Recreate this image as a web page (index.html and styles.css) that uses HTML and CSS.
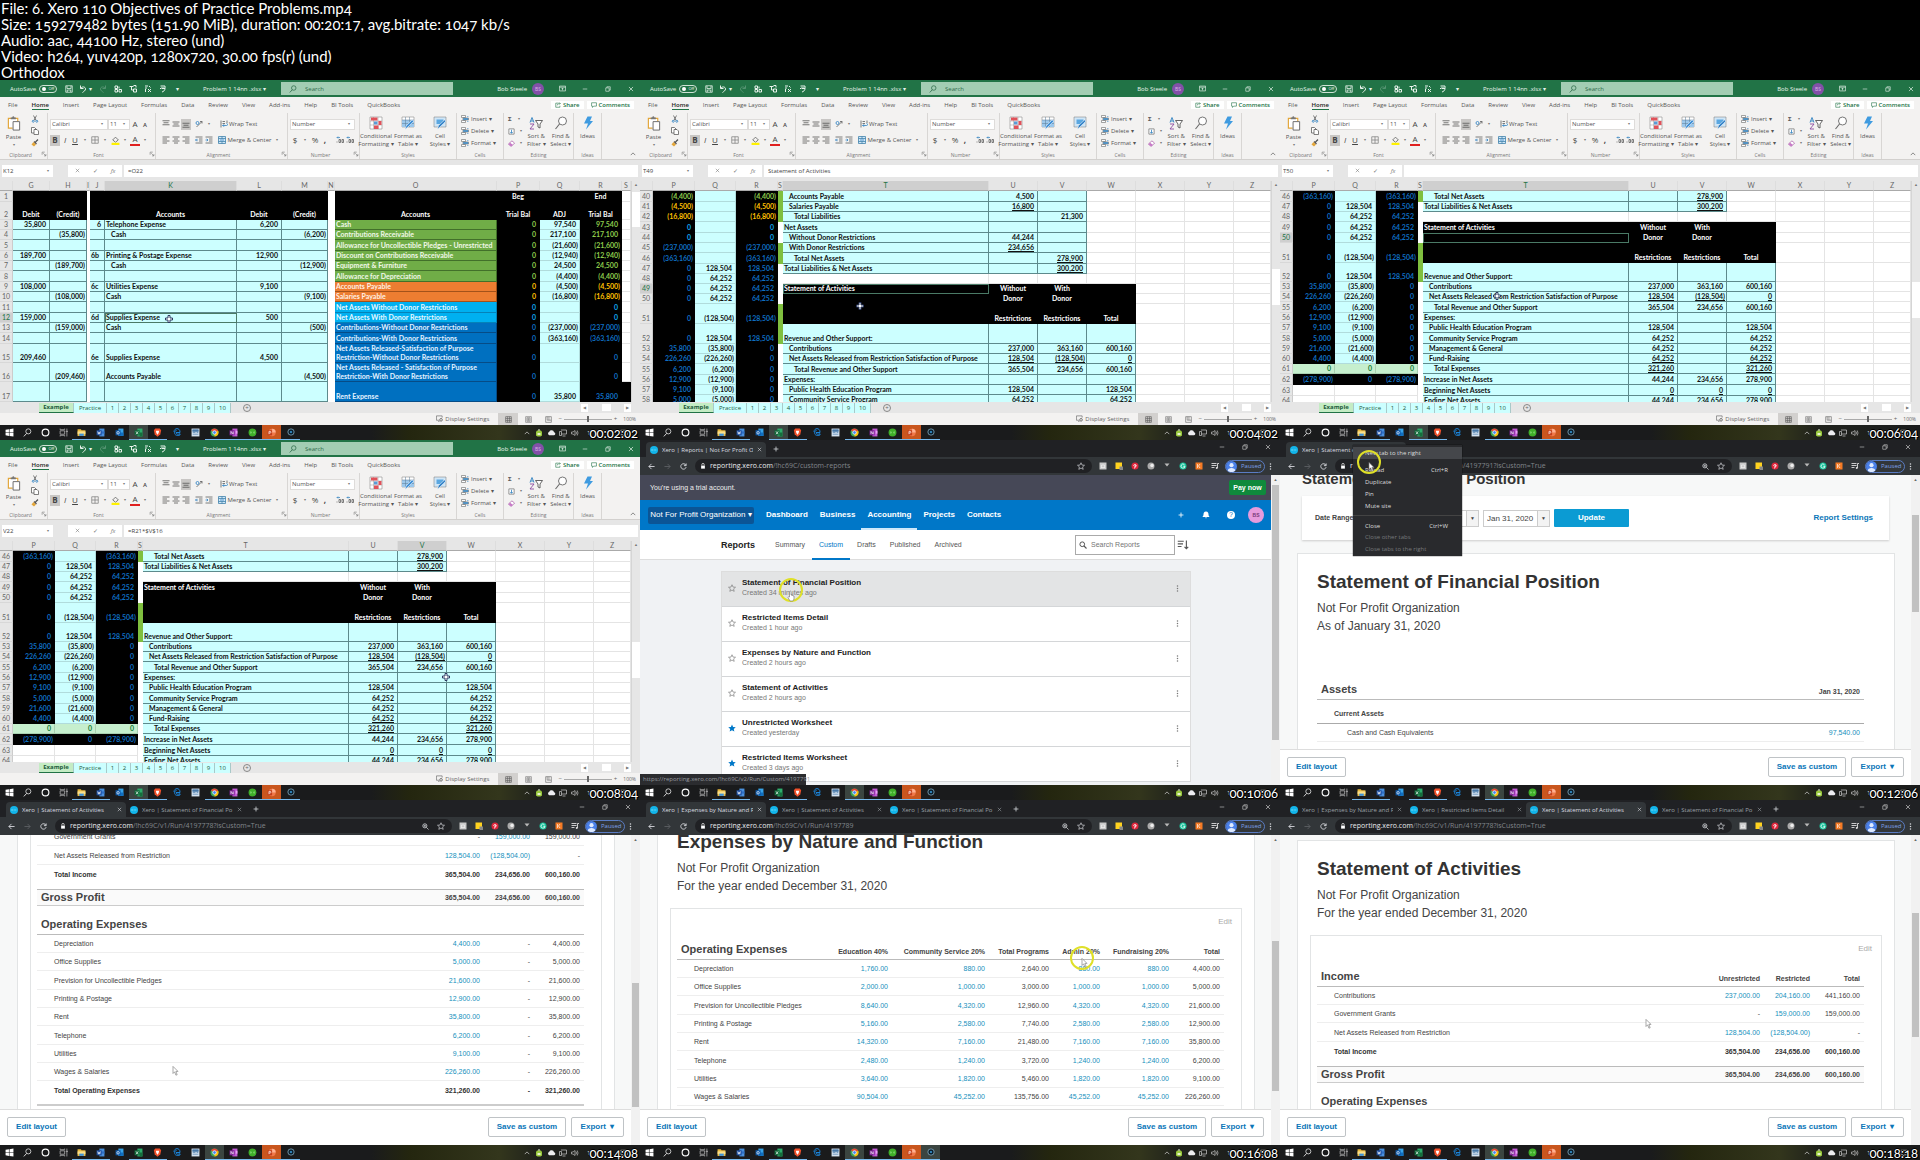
FILE: index.html
```html
<!DOCTYPE html>
<html lang="en">
<head>
<meta charset="utf-8">
<title>6. Xero 110 Objectives of Practice Problems.mp4</title>
<link rel="stylesheet" href="styles.css">
</head>
<body>
<svg class="sprite" aria-hidden="true">
  <symbol id="save" viewBox="0 0 16 16"><path d="M1.500 1.500h13v13h-13zM4 2v5h8V2M4.500 14v-4h7v4" fill="none" stroke="currentColor" stroke-width="1.500"/></symbol>
  <symbol id="undo" viewBox="0 0 16 16"><path d="M3 1v6h6M3.500 6.500C6 2.500 13 3 13 8c0 3-3 4.500-6 7" fill="none" stroke="currentColor" stroke-width="2"/></symbol>
  <symbol id="redo" viewBox="0 0 16 16"><path d="M13 1v6H7M12.500 6.500C10 2.500 3 3 3 8c0 3 3 4.500 6 7" fill="none" stroke="currentColor" stroke-width="2"/></symbol>
  <symbol id="qa1" viewBox="0 0 16 16"><path d="M2 2h5v5H2zM2 9h5v5H2zM10 9h5v5h-5zM10 3v4" fill="none" stroke="currentColor" stroke-width="2"/></symbol>
  <symbol id="qa2" viewBox="0 0 16 16"><path d="M1 3h8M5 3v7h4M9 8h6v6H9zM9 1h5v4" fill="none" stroke="currentColor" stroke-width="2"/></symbol>
  <symbol id="qa3" viewBox="0 0 16 16"><path d="M2 2h6M2 6h4M3 8v6M8 8l6 6M14 8l-6 6M10 2l3 3" fill="none" stroke="currentColor" stroke-width="2"/></symbol>
  <symbol id="qa4" viewBox="0 0 16 16"><path d="M3 2h9v5H5M12 7c0 4-3 6-6 7M2 8l3-3M8 4v3" fill="none" stroke="currentColor" stroke-width="2"/></symbol>
  <symbol id="search" viewBox="0 0 16 16"><circle cx="9.500" cy="6" r="4.500" fill="none" stroke="currentColor" stroke-width="1.500"/><path d="M6.500 9.500L1.500 15" stroke="currentColor" stroke-width="1.700"/></symbol>
  <symbol id="searchr" viewBox="0 0 16 16"><circle cx="6.500" cy="6.500" r="4.700" fill="none" stroke="currentColor" stroke-width="2"/><path d="M10 10l5 5" stroke="currentColor" stroke-width="2.200"/></symbol>
  <symbol id="zoomin" viewBox="0 0 16 16"><circle cx="6.500" cy="6.500" r="4.700" fill="none" stroke="currentColor" stroke-width="1.800"/><path d="M10 10l5 5M4 6.500h5M6.500 4v5" stroke="currentColor" stroke-width="1.600"/></symbol>
  <symbol id="display" viewBox="0 0 16 16"><path d="M8 12H1V2h13v4M5 15h3" fill="none" stroke="currentColor" stroke-width="1.500"/><circle cx="11.500" cy="11" r="3" fill="none" stroke="currentColor" stroke-width="2"/></symbol>
  <symbol id="ribbonmode" viewBox="0 0 16 16"><path d="M1 2.500h14v11H1zM1 5h14M8 12V7M5.500 9.500L8 7l2.500 2.500" fill="none" stroke="currentColor" stroke-width="1.500"/></symbol>
  <symbol id="min" viewBox="0 0 16 16"><path d="M2 8h12" stroke="currentColor" stroke-width="1.600"/></symbol>
  <symbol id="max" viewBox="0 0 16 16"><path d="M2 5h9v9H2zM5 5V2h9v9h-3" fill="none" stroke="currentColor" stroke-width="1.600"/></symbol>
  <symbol id="close" viewBox="0 0 16 16"><path d="M2.500 2.500l11 11M13.500 2.500l-11 11" stroke="currentColor" stroke-width="1.800"/></symbol>
  <symbol id="plus" viewBox="0 0 16 16"><path d="M8 1.500v13M1.500 8h13" stroke="currentColor" stroke-width="2.200"/></symbol>
  <symbol id="share" viewBox="0 0 16 16"><path d="M9 3H2v11h11v-4M6 9c0-4 4-5 8-5M11 1l3 3-3 3" fill="none" stroke="currentColor" stroke-width="1.600"/></symbol>
  <symbol id="comment" viewBox="0 0 16 16"><path d="M1.500 2h13v9H7l-3 3.500V11H1.500z" fill="none" stroke="currentColor" stroke-width="1.600"/></symbol>
  <symbol id="paste" viewBox="0 0 28 32"><path d="M11 26H2V5h20v6" fill="#fff" stroke="#e2a63a" stroke-width="2.500"/><path d="M7 7V3h3c1-3 4-3 5 0h3v4z" fill="#777"/><path d="M12 12h14v18H12z" fill="#fff" stroke="#666" stroke-width="2"/></symbol>
  <symbol id="cut" viewBox="0 0 16 16"><path d="M5 1l5 10M11 1L6 11" stroke="#555" stroke-width="1.500"/><circle cx="4.500" cy="12.500" r="2" fill="none" stroke="#2b7fc0" stroke-width="1.600"/><circle cx="11.500" cy="12.500" r="2" fill="none" stroke="#2b7fc0" stroke-width="1.600"/></symbol>
  <symbol id="copy" viewBox="0 0 16 16"><path d="M6 12H1V1h6l3 3v2M6 5h6l3 3v7H6z" fill="#fff" stroke="#555" stroke-width="1.500"/></symbol>
  <symbol id="brush" viewBox="0 0 16 16"><path d="M14 1l-5 5M6 5l5 5" stroke="#555" stroke-width="2.500"/><path d="M5 6l5 5-4 4-5-4z" fill="#e2a63a"/></symbol>
  <symbol id="al" viewBox="0 0 16 16"><path d="M1 2h14M1 6h9M1 10h14M1 14h9" stroke="#555" stroke-width="1.600"/></symbol>
  <symbol id="ac" viewBox="0 0 16 16"><path d="M1 2h14M4 6h8M1 10h14M4 14h8" stroke="#555" stroke-width="1.600"/></symbol>
  <symbol id="ar" viewBox="0 0 16 16"><path d="M1 2h14M6 6h9M1 10h14M6 14h9" stroke="#555" stroke-width="1.600"/></symbol>
  <symbol id="vt" viewBox="0 0 16 16"><path d="M1 1.500h14M3 5.500h10M1 9.500h14" stroke="#555" stroke-width="1.600"/></symbol>
  <symbol id="vm" viewBox="0 0 16 16"><path d="M1 4h14M3 8h10M1 12h14" stroke="#555" stroke-width="1.600"/></symbol>
  <symbol id="vb" viewBox="0 0 16 16"><path d="M1 6.500h14M3 10.500h10M1 14.500h14" stroke="#555" stroke-width="1.600"/></symbol>
  <symbol id="orient" viewBox="0 0 16 16"><path d="M3 14L14 3M14 7V3h-4" fill="none" stroke="#555" stroke-width="1.500"/><circle cx="5" cy="6" r="3" fill="none" stroke="#2b7fc0" stroke-width="1.600"/></symbol>
  <symbol id="indl" viewBox="0 0 16 16"><path d="M1 2h14M8 6h7M8 10h7M1 14h14" stroke="#555" stroke-width="1.500"/><path d="M6 8H1M3.500 5.500L1 8l2.500 2.500" fill="none" stroke="#2b7fc0" stroke-width="1.500"/></symbol>
  <symbol id="indr" viewBox="0 0 16 16"><path d="M1 2h14M8 6h7M8 10h7M1 14h14" stroke="#555" stroke-width="1.500"/><path d="M1 8h5M3.500 5.500L6 8l-2.500 2.500" fill="none" stroke="#2b7fc0" stroke-width="1.500"/></symbol>
  <symbol id="wrap" viewBox="0 0 16 16"><path d="M2 1v14M14 1v5M5 3h5M5 7h5" stroke="#555" stroke-width="1.500"/><path d="M5 11h8c3 0 3-4 0-4M8 8.500L5.500 11 8 13.500" fill="none" stroke="#2b7fc0" stroke-width="1.600"/></symbol>
  <symbol id="merge" viewBox="0 0 16 16"><path d="M1 1h14v14H1zM1 5h14M1 11h14M8 1v4M8 11v4" fill="#cfe6f7" stroke="#3a7da8" stroke-width="1.500"/><path d="M4 8h8" stroke="#2b7fc0" stroke-width="1.500"/></symbol>
  <symbol id="borders" viewBox="0 0 16 16"><path d="M1.500 1.500h13v13h-13zM8 1.500v13M1.500 8h13" fill="none" stroke="#777" stroke-width="1.400"/></symbol>
  <symbol id="fill" viewBox="0 0 16 16"><path d="M3 7l5-5 5 5-5 4z" fill="none" stroke="#666" stroke-width="1.500"/><path d="M1 12h14v4H1z" fill="#fff200"/></symbol>
  <symbol id="dec" viewBox="0 0 16 16"><path d="M1 12h2M6 7h3v6H6zM12 7h3v6h-3z" fill="none" stroke="#555" stroke-width="1.500"/><path d="M8 3H2M4 1L2 3l2 2" fill="none" stroke="#2b7fc0" stroke-width="1.400"/></symbol>
  <symbol id="condfmt" viewBox="0 0 28 28"><path d="M2 2h24v24H2z" fill="#fff" stroke="#777"/><path d="M9 2v24M18 2v24M2 10h24M2 18h24" stroke="#999"/><path d="M4 3h13v6H4zM10 19h9v7h-9z" fill="#e0525a"/><path d="M10 11h7v6h-7z" fill="#5a9bd5"/><path d="M19 10h6v8h-6z" fill="#e0525a"/></symbol>
  <symbol id="fmttable" viewBox="0 0 28 28"><path d="M2 2h24v20H2z" fill="#fff" stroke="#777"/><path d="M2 8h24v14H2z" fill="#9cc8ec"/><path d="M9 2v20M17 2v20M2 8h24M2 15h24" stroke="#5b7b95"/><path d="M26 10L14 22l-6 5 2-7 12-12z" fill="#3f8fd6" stroke="#fff"/></symbol>
  <symbol id="cellstyle" viewBox="0 0 28 28"><path d="M2 2h24v20H2z" fill="#cfe6f7" stroke="#777"/><path d="M7 7h14v9H7z" fill="#5aa7e0"/><path d="M26 10L16 20l-7 7 2-8 12-11z" fill="#2f7fc6" stroke="#fff"/></symbol>
  <symbol id="cells" viewBox="0 0 16 16"><path d="M1 1h8v4H1zM1 11h8v4H1zM4 6h11v4H4z" fill="#fff" stroke="#666" stroke-width="1.200"/><path d="M5 7h9v2H5zM12 3h3M12 13h3" fill="#2b7fc0" stroke="#2b7fc0"/></symbol>
  <symbol id="filldown" viewBox="0 0 16 16"><path d="M2 2h12v12H2z" fill="#fff" stroke="#666" stroke-width="1.500"/><path d="M8 4v8M5 9l3 3 3-3" fill="none" stroke="#2b7fc0" stroke-width="1.800"/></symbol>
  <symbol id="eraser" viewBox="0 0 16 16"><path d="M6 14L1 9l8-7 6 5-7 7z" fill="#fff" stroke="#a04aa0" stroke-width="1.500"/><path d="M6 14L1 9l4-3 6 5-3 3z" fill="#c77bc7"/></symbol>
  <symbol id="sortf" viewBox="0 0 28 28"><path d="M2 13L6 3l4 10M3.500 10h5" fill="none" stroke="#2b7fc0" stroke-width="1.800"/><path d="M2 16h8L2 26h8" fill="none" stroke="#8a4aa0" stroke-width="1.800"/><path d="M13 9h14l-5 7v8l-4-2v-6z" fill="#fff" stroke="#555" stroke-width="1.800"/></symbol>
  <symbol id="find" viewBox="0 0 28 28"><circle cx="17" cy="10" r="8" fill="#fff" stroke="#666" stroke-width="1.800"/><path d="M11 16L3 26" stroke="#666" stroke-width="2.200"/></symbol>
  <symbol id="bolt" viewBox="0 0 28 28"><path d="M13 1h9l-4 9h6L10 27l4-12H6z" fill="#3f9be0"/></symbol>
  <symbol id="launch" viewBox="0 0 16 16"><path d="M3 10V3h7M6 6l7 7M13 8v5H8" fill="none" stroke="#777" stroke-width="1.600"/></symbol>
  <symbol id="up" viewBox="0 0 16 16"><path d="M2 11l6-6 6 6" fill="none" stroke="currentColor" stroke-width="1.800"/></symbol>
  <symbol id="vnormal" viewBox="0 0 16 16"><path d="M1.500 1.500h13v13h-13zM6 1.500v13M10.500 1.500v13M1.500 6h13M1.500 10.500h13" fill="none" stroke="#555" stroke-width="1.400"/></symbol>
  <symbol id="vpage" viewBox="0 0 16 16"><path d="M1.500 1.500h13v13h-13zM4.500 4h7v8h-7zM6 6h4M6 8h4M6 10h4" fill="none" stroke="#666" stroke-width="1.300"/></symbol>
  <symbol id="vbreak" viewBox="0 0 16 16"><path d="M1.500 1.500h13v13h-13zM5 1.500v8h9M9 1.500v8" fill="none" stroke="#666" stroke-width="1.400"/></symbol>
  <symbol id="win" viewBox="0 0 16 16"><path d="M1 3l6-1v5.500H1zM8 2l7-1v6.500H8zM1 8.500h6V14l-6-1zM8 8.500h7V15l-7-1z" fill="#fff"/></symbol>
  <symbol id="ring" viewBox="0 0 16 16"><circle cx="8" cy="8" r="6" fill="none" stroke="#fff" stroke-width="2"/></symbol>
  <symbol id="tview" viewBox="0 0 16 16"><path d="M2 5h8v6H2zM2 1v2h8V1M2 15v-2h8v2M14 1v14M12 6h4" fill="none" stroke="#bbb" stroke-width="1.300"/></symbol>
  <symbol id="folder" viewBox="0 0 16 16"><path d="M1 2h6l1 2h7v10H1z" fill="#e9b93f"/><path d="M1 6h14v5H1z" fill="#fbe08a"/><path d="M4 10h8v4H4z" fill="#3f93d8"/></symbol>
  <symbol id="word" viewBox="0 0 16 16"><path d="M6 1h9v14H6z" fill="#4a90dc"/><path d="M6 6h9v4H6z" fill="#2f6fc4"/><path d="M1 4h9v9H1z" fill="#1c4ea0"/><path d="M3 6l1.300 5L5.500 7l1.200 4L8 6" fill="none" stroke="#fff" stroke-width="1.100"/></symbol>
  <symbol id="outlook" viewBox="0 0 16 16"><path d="M6 1h9v13H6z" fill="#38a3e8"/><path d="M6 8h9v6H6z" fill="#0f6fc0"/><path d="M1 4h9v9H1z" fill="#0f5aa8"/><circle cx="5.500" cy="8.500" r="2.200" fill="none" stroke="#fff" stroke-width="1.200"/></symbol>
  <symbol id="excel" viewBox="0 0 16 16"><path d="M6 1h9v14H6z" fill="#2fae6c"/><path d="M10 8h5v7h-5z" fill="#15703c"/><path d="M1 4h9v9H1z" fill="#12693a"/><path d="M3.500 6l4 5M7.500 6l-4 5" stroke="#fff" stroke-width="1.200"/></symbol>
  <symbol id="onenote" viewBox="0 0 16 16"><path d="M6 1h9v14H6z" fill="#c45ad6"/><path d="M12 5h3v5h-3z" fill="#e8a6f2"/><path d="M1 4h9v9H1z" fill="#7c1f94"/><path d="M3.500 11V6l4 5V6" fill="none" stroke="#fff" stroke-width="1.200"/></symbol>
  <symbol id="ppt" viewBox="0 0 16 16"><circle cx="9" cy="8" r="6.500" fill="#f0784a"/><path d="M9 1.500A6.500 6.500 0 0 1 15.500 8H9z" fill="#ffb090"/><path d="M1 4h8v9H1z" fill="#c43e1c"/><path d="M3.500 11V6h2c2 0 2 3 0 3h-2" fill="none" stroke="#fff" stroke-width="1.200"/></symbol>
  <symbol id="pad" viewBox="0 0 16 16"><path d="M1 1h14v14H1z" fill="#d7e4f0"/><path d="M3 3h10v3H3zM3 8h5M3 11h10M10 8h3" fill="#4a7aa8" stroke="#4a7aa8" stroke-width="1.200"/></symbol>
  <symbol id="brave" viewBox="0 0 16 16"><path d="M4 1h8l2.500 3-1.500 7-5 4.500L3 11 1.500 4z" fill="#f0502a"/><path d="M5 5h6l-1 4-2 3-2-3z" fill="#fff"/></symbol>
  <symbol id="edge" viewBox="0 0 16 16"><path d="M2 8c0-9 12-9 12 0v1H6c0 4 5 4 8 2.500V14c-5 2-11 1-11-5 0-2 2-4 4-4" fill="none" stroke="#1b83d6" stroke-width="2"/></symbol>
  <symbol id="chrome" viewBox="0 0 16 16"><circle cx="8" cy="8" r="7" fill="#3aa757"/><path d="M8 8L2 4.500A7 7 0 0 1 14.500 5z" fill="#ea4335"/><path d="M8 8l6.500-3A7 7 0 0 1 8 15z" fill="#fbbc05"/><circle cx="8" cy="8" r="3.200" fill="#4285f4" stroke="#fff" stroke-width="1.300"/></symbol>
  <symbol id="qb" viewBox="0 0 16 16"><circle cx="8" cy="8" r="7" fill="#3fae2a"/><path d="M5 5.500v5M11 5.500v5M4 8h3M9 8h3" stroke="#7fd46c" stroke-width="1.300"/></symbol>
  <symbol id="media" viewBox="0 0 16 16"><circle cx="8" cy="8" r="6.300" fill="#0c2230" stroke="#9cc7e0" stroke-width="1.300"/><circle cx="8" cy="8" r="2" fill="#3b9ede"/></symbol>
  <symbol id="gpu" viewBox="0 0 16 16"><path d="M4 3h8l2 3v7l-3 2H5l-3-2V6z" fill="#9acb3c"/><path d="M5 8h6v4H5zM6 1h4v2H6z" fill="#e8f5cf"/></symbol>
  <symbol id="cloud" viewBox="0 0 16 16"><path d="M4 13a3.500 3.500 0 0 1 0-6.500 4.500 4.500 0 0 1 8.500 1A2.800 2.800 0 0 1 12.500 13z" fill="#eee"/></symbol>
  <symbol id="monitor" viewBox="0 0 16 16"><path d="M4 2h11v8H5M1 5h4v8H1zM7 14h6" fill="none" stroke="#ccc" stroke-width="1.400"/></symbol>
  <symbol id="speaker" viewBox="0 0 16 16"><path d="M1 6h3l4-3v10l-4-3H1zM10 5q2 3 0 6M12.500 3q3 5 0 10" fill="none" stroke="#ccc" stroke-width="1.300"/></symbol>
  <symbol id="note" viewBox="0 0 16 16"><path d="M1.500 2.500h13v9H9l-3 3v-3H1.500z" fill="none" stroke="#ccc" stroke-width="1.400"/></symbol>
  <symbol id="back" viewBox="0 0 16 16"><path d="M15 8H2M8 2L2 8l6 6" fill="none" stroke="currentColor" stroke-width="2"/></symbol>
  <symbol id="fwd" viewBox="0 0 16 16"><path d="M1 8h13M8 2l6 6-6 6" fill="none" stroke="currentColor" stroke-width="2"/></symbol>
  <symbol id="reload" viewBox="0 0 16 16"><path d="M13.500 5A6.200 6.200 0 1 0 14 9.500M14 1v5H9" fill="none" stroke="currentColor" stroke-width="2"/></symbol>
  <symbol id="lock" viewBox="0 0 16 16"><path d="M3 7h10v8H3z" fill="#fff"/><path d="M5 7V4a3 3 0 0 1 6 0v3" fill="none" stroke="#fff" stroke-width="1.800"/></symbol>
  <symbol id="star" viewBox="0 0 16 16"><path d="M8 1.500l2 4.600 5 .4-3.800 3.300 1.200 4.900L8 12.100l-4.400 2.600 1.200-4.900L1 6.500l5-.4z" fill="none" stroke="currentColor" stroke-width="1.300"/></symbol>
  <symbol id="starf" viewBox="0 0 16 16"><path d="M8 1l2.200 5 5.300.4-4 3.500 1.200 5.200L8 12.400 3.300 15.100l1.200-5.200-4-3.500L5.800 6z" fill="#0078c8"/></symbol>
  <symbol id="e1" viewBox="0 0 16 16"><path d="M1 1h14v14H1z" fill="#c9c9c9"/><path d="M4 11h8M5 11V6h6v5" stroke="#fff" fill="none"/></symbol>
  <symbol id="e2" viewBox="0 0 16 16"><path d="M1 1h13v9l-4 4H1z" fill="#ffd21f"/><path d="M9 9h7v7H9z" fill="#888"/></symbol>
  <symbol id="e3" viewBox="0 0 16 16"><circle cx="8" cy="8" r="7" fill="#e0263c"/><path d="M7 13l2-7M5.500 8c-1-4 6-4 5 0-.5 2-2.500 2-3 1" fill="none" stroke="#fff" stroke-width="1.600"/></symbol>
  <symbol id="e4" viewBox="0 0 16 16"><circle cx="8" cy="8" r="7" fill="#aaa"/><circle cx="10" cy="7" r="3.500" fill="#eee"/></symbol>
  <symbol id="e5" viewBox="0 0 16 16"><path d="M3 3h10l-5 6z" fill="#bbb"/></symbol>
  <symbol id="e6" viewBox="0 0 16 16"><circle cx="8" cy="8" r="7" fill="#15c39a"/><path d="M11 5.500a4 4 0 1 0 1 3H8.500" fill="none" stroke="#fff" stroke-width="1.600"/></symbol>
  <symbol id="e7" viewBox="0 0 16 16"><path d="M1 1h14v14H1z" fill="#f47a24"/><path d="M5 4v8M10 4l-3 4 3 4" fill="none" stroke="#fbd0b0" stroke-width="2"/></symbol>
  <symbol id="queue" viewBox="0 0 16 16"><path d="M1 3h10M1 7h10M1 11h6M13 12V3h3" fill="none" stroke="#ddd" stroke-width="1.800"/><circle cx="11.500" cy="12" r="2" fill="#ddd"/></symbol>
  <symbol id="person" viewBox="0 0 16 16"><circle cx="8" cy="8" r="8" fill="#4a80e8"/><circle cx="8" cy="6" r="3" fill="#dfeaff"/><path d="M2.500 14c0-5 11-5 11 0-3 2.500-8 2.500-11 0z" fill="#dfeaff"/></symbol>
  <symbol id="kebab" viewBox="0 0 16 16"><circle cx="8" cy="2.500" r="1.700" fill="currentColor"/><circle cx="8" cy="8" r="1.700" fill="currentColor"/><circle cx="8" cy="13.500" r="1.700" fill="currentColor"/></symbol>
  <symbol id="xero" viewBox="0 0 16 16"><circle cx="8" cy="8" r="8" fill="#13b5ea"/><path d="M3 6.500l3 3M6 6.500l-3 3M7.500 8h2.500M11.500 6.500v3" stroke="#8be0f8" stroke-width="1.200"/></symbol>
  <symbol id="bell" viewBox="0 0 16 16"><path d="M8 1c4 0 5 3 5 6 0 2 1 3 2 5H1c1-2 2-3 2-5 0-3 1-6 5-6zM6 13h4l-2 2z" fill="#fff"/></symbol>
  <symbol id="sortd" viewBox="0 0 16 16"><path d="M1 3h8M1 6.500h7M1 10h5M12.500 2v11M10 10.500l2.500 2.500 2.500-2.500" fill="none" stroke="#555" stroke-width="1.500"/></symbol>
  <symbol id="arrow" viewBox="0 0 16 24"><path d="M2 1v17l4-4 3 8 3-1-3-8h5z" fill="#fff" stroke="#777" stroke-width="1.500"/></symbol>
  <symbol id="hand" viewBox="0 0 16 24"><path d="M5 12V3q1.500-2 3 0v7l6 2v6l-2 4H6l-4-7q1-3 3-1z" fill="#fff" stroke="#777" stroke-width="1.300"/></symbol>
  <symbol id="cross" viewBox="0 0 16 16"><path d="M6 1h4v5h5v4h-5v5H6v-5H1V6h5z" fill="#fff" stroke="#2c3a62" stroke-width="2"/></symbol>
</svg>

<header class="info">
  <p>File: 6. Xero 110 Objectives of Practice Problems.mp4</p>
  <p>Size: 159279482 bytes (151.90 MiB), duration: 00:20:17, avg.bitrate: 1047 kb/s</p>
  <p>Audio: aac, 44100 Hz, stereo (und)</p>
  <p>Video: h264, yuv420p, 1280x720, 30.00 fps(r) (und)</p>
  <p>Orthodox</p>
</header>
<main class="frames" id="frames"></main>
<script src="frames.js"></script>
</body>
</html>
```

FILE: styles.css
```css
* { box-sizing: border-box; }
body { margin: 0; background: #000; font-family: "Open Sans", sans-serif; }
p, h1, h2 { margin: 0; font-weight: 400; }
button, input, select { font: inherit; color: inherit; background: none; border: 0; padding: 0; margin: 0; min-width: 0; border-radius: 0; appearance: none; }
a { color: inherit; text-decoration: none; }
table { border-collapse: separate; border-spacing: 0; table-layout: fixed; width: 100%; }
td, th { padding: 0; }
.sprite { display: none; }
.ic { display: block; flex: none; }

.info { color: #fff; font: 15px/16px Lato, sans-serif; font-variant-numeric: oldstyle-nums; padding-left: 1px; height: 80px; }
.frames { display: grid; grid-template-columns: repeat(3, 1fr); }
.frame { position: relative; display: flex; flex-direction: column; aspect-ratio: 16 / 9; overflow: hidden; font-size: 6px; line-height: 8px; white-space: nowrap; min-width: 0; }
.time { position: absolute; right: 2px; bottom: 0; font: 13px/13px Lato, sans-serif; font-variant-numeric: oldstyle-nums; color: #fff; text-shadow: 1px 0 #000, -1px 0 #000, 0 1px #000, 0 -1px #000, 1px 1px #000; }
.overlay { position: absolute; }
.halo { position: absolute; border: 2px solid #dfe028; border-radius: 50%; width: 24px; height: 24px; }

/* taskbar */
.taskbar { flex: none; height: 15px; display: flex; background: linear-gradient(90deg, #1a1b1c 58%, #24260f 64%, #33361c 78%, #20221c 84%, #1b1c1c); }
.taskbar button { width: 19px; display: flex; align-items: center; justify-content: center; border-bottom: 1px solid transparent; color: #ddd; }
.taskbar .sys { width: 18px; }
.taskbar .run { border-color: #76b9ed; }
.taskbar .cur { background: #3b4541; }
.taskbar .hl { background: #c9561e; }
.tray { margin-left: auto; display: flex; align-items: center; width: 119px; color: #ddd; }
.tray > * { width: 12px; display: flex; justify-content: center; }
.tray .clock { width: 37px; justify-content: flex-start; padding-left: 6px; }

/* spreadsheet window */
.xtitle { flex: none; height: 17px; display: flex; align-items: center; background: #217346; color: #e8f3ec; }
.auto { width: 58px; padding-left: 10px; display: flex; align-items: center; gap: 3px; }
.switch { width: 18px; height: 8px; border: 1px solid #cfe3d6; border-radius: 4px; display: flex; align-items: center; justify-content: space-between; padding: 0 2px; font-size: 4px; }
.switch i { width: 4px; height: 4px; border-radius: 50%; background: #fff; }
.qa { display: flex; width: 145px; padding-left: 3px; }
.qa button { width: 15px; display: flex; align-items: center; justify-content: center; }
.qa .w { width: 19px; gap: 2px; }
.dim { opacity: .25; }
.fname { width: 78px; }
.xsearch { width: 172px; height: 13px; background: #a3cdb3; display: flex; align-items: center; gap: 8px; padding-left: 8px; color: #2f6b4a; }
.xsearch input::placeholder { color: #2f6b4a; opacity: 1; }
.user { margin-left: auto; display: flex; align-items: center; gap: 5px; }
.user b { width: 12px; height: 12px; border-radius: 50%; background: #8250a8; color: #d8b8ea; text-align: center; line-height: 12px; font-size: 5px; font-weight: 400; }
.user button { width: 18px; display: flex; justify-content: center; }
.user .ra { margin-left: 4px; }
.xtabs { flex: none; height: 16px; display: flex; align-items: center; gap: 14px; padding: 0 6px 0 8px; background: #f3f2f1; color: #555; }
.xtabs .on { color: #222; font-weight: 600; border-bottom: 1px solid #217346; }
.xtabs .act { background: #fff; color: #217346; font-weight: 600; display: flex; align-items: center; gap: 2px; padding: 0 4px; }
.xtabs .sh { margin-left: auto; }
.xtabs .cm { margin-left: -11px; }
.ribbon { flex: none; height: 47px; display: grid; grid-template-columns: 48px 108px 132px 72px 97px 47px 70px 28px 1fr; background: #f3f2f1; border-bottom: 1px solid #d2d0ce; color: #555; }
.grp { display: flex; flex-direction: column; border-right: 1px solid #d8d6d4; }
.grp:last-child { border: 0; justify-content: flex-end; align-items: flex-end; padding: 0 4px 2px; }
.body { height: 38px; display: flex; }
.lbl { display: flex; font-size: 5px; color: #777; }
.lbl span { flex: 1; text-align: center; }
.rows { display: flex; flex-direction: column; padding: 3px 0 0 2px; flex: 1; }
.rows > div { height: 16px; display: flex; align-items: center; }
.t { width: 10px; height: 11px; display: flex; align-items: center; justify-content: center; font-size: 8px; color: #444; }
.t.on { background: #c8c6c4; }
.dd { width: 10px; text-align: center; font-size: 4px; color: #777; }
.combo { height: 11px; background: #fff; border: 1px solid #dedcda; display: flex; align-items: center; }
.combo select { flex: 1; padding-left: 1px; }
.redline { border-bottom: 2px solid #e02020; }
.big { display: flex; flex-direction: column; align-items: center; padding-top: 3px; flex: 1; }
.big .ic { margin-bottom: 2px; }
.stack { display: flex; flex-direction: column; width: 20px; }
.stack button { height: 12px; display: flex; align-items: center; gap: 2px; padding-left: 4px; }
.cellsg .stack { width: 46px; }
.fbar { flex: none; height: 21px; display: flex; align-items: center; gap: 2px; padding: 0 2px; background: #e6e6e6; color: #444; }
.fbar > * { height: 12px; background: #fff; }
.name { width: 51px; display: flex; align-items: center; margin-right: 13px; }
.name input { width: 44px; padding-left: 1px; }
.fx { width: 54px; display: flex; align-items: center; justify-content: space-around; color: #777; }
.fbar .formula { flex: 1; padding-left: 4px; }
.sheetwrap { flex: 1; min-height: 0; display: flex; background: #fff; }
.sheet { flex: 1; min-width: 0; overflow: hidden; }
.vbar { flex: none; width: 9px; background: #e6e6e6; border-left: 1px solid #d5d5d5; font-size: 4px; color: #777; text-align: center; }
.vbar div { background: #fff; }

.grid { font: 700 7px/9px Lato, sans-serif; font-variant-ligatures: none; }
.grid tr { height: 10px; }
.grid .h11 { height: 11px; } .grid .h18 { height: 18px; } .grid .h19 { height: 19px; } .grid .h20 { height: 20px; }
.grid th { background: #e6e6e6; color: #666; font-weight: 400; border-right: 1px solid #ccc; border-bottom: 1px solid #d8d8d8; vertical-align: bottom; text-align: center; overflow: hidden; }
.grid thead th { border-right-color: #ddd; border-bottom-color: #aaa; }
.grid th.hot { background: #cfcfcf; color: #217346; }
.grid td { vertical-align: bottom; border-right: 1px solid #e4e4e4; border-bottom: 1px solid #e4e4e4; overflow: hidden; color: #111; }
.grid td.n { text-align: right; padding-right: 3px; }
.grid td.pr { padding-right: 1px; }
.grid td.c { text-align: center; }
.grid .cy { background: #ccffff; border-color: #5d8a8c; }
.grid .cq { background: #ccffff; border-color: #b0dcdc; }
.grid .bk { background: #000; border-color: #000; color: #fff; }
.grid .bl { background: #000; border-color: #000; color: #0f6ec0; }
.grid .lb { background: #000; border-color: #000; color: #10a4ec; }
.grid .gn { background: #000; border-color: #000; color: #8ccc4c; }
.grid .ye { background: #000; border-color: #000; color: #ffc000; }
.grid .fg { background: #70ad47; border-color: #42702a; color: #f0f8e8; }
.grid .fo { background: #ed7d31; border-color: #a3521a; color: #fff0e4; }
.grid .fb { background: #00b0f0; border-color: #0582b8; color: #e8f8ff; }
.grid .fd { background: #0070c0; border-color: #064c86; color: #e4f2ff; }
.grid .sg { background: #7fbf3f; border-color: #7fbf3f; }
.grid .sw { background: #fff; border-color: #fff; }
.grid .tot { background: #c6efce; border-color: #a8d0b0; color: #15803a; }
.grid .i0 { padding-left: 1px; } .grid .i1 { padding-left: 6px; } .grid .i2 { padding-left: 11px; }
.grid .wrap2 { white-space: pre; }
.grid td.sel { outline: 1px solid #4a7a66; outline-offset: -1px; }
.stabs { flex: none; height: 11px; display: flex; align-items: center; background: #e6e6e6; color: #217346; padding-left: 39px; }
.stabs button { height: 10px; width: 12px; background: #ccffff; border-right: 1px solid #a9c9c9; color: #1b5a3c; }
.stabs .ex { width: 35px; background: #c4ecc4; font-weight: 700; border-bottom: 1px solid #217346; }
.stabs .prac { width: 33px; }
.stabs .ten { width: 16px; }
.stabs .new { width: 8px; height: 8px; line-height: 6px; border: 1px solid #888; border-radius: 50%; background: none; color: #666; margin-left: 12px; }
.hbar { margin-left: auto; width: 50px; display: flex; justify-content: space-between; font-size: 4px; color: #777; margin-right: 9px; }
.hbar i { width: 9px; height: 7px; background: #fff; }
.hbar span { background: #fff; width: 7px; text-align: center; }
.status { flex: none; height: 12px; display: flex; align-items: center; justify-content: flex-end; background: #f3f2f1; color: #666; padding-right: 4px; }
.status .ds { display: flex; gap: 2px; margin-right: 9px; }
.status button { width: 20px; height: 12px; display: flex; align-items: center; justify-content: center; }
.status .on { background: #d2d0ce; }
.status input { width: 48px; height: 10px; margin: 0 2px; background: linear-gradient(#aaa, #aaa) center / 100% 1px no-repeat; }
.status input::-webkit-slider-thumb { appearance: none; width: 2px; height: 6px; background: #666; }
.status .pct { font-size: 5px; margin-left: 6px; }

/* browser window */
.ctabs { flex: none; height: 17px; display: flex; background: #202124; padding-left: 6px; color: #9aa0a6; }
.ctab { width: 120px; height: 15px; margin-top: 2px; display: flex; align-items: center; gap: 4px; padding: 0 4px; border-radius: 4px 4px 0 0; }
.ctab span { flex: 1; overflow: hidden; }
.ctab.on { background: #323639; color: #dadce0; }
.ctabs .add { width: 20px; display: flex; align-items: center; justify-content: center; color: #cfd2d6; }
.wc { margin-left: auto; display: flex; padding-right: 1px; color: #ccc; }
.wc button { width: 23px; height: 14px; display: flex; align-items: center; justify-content: center; }
.cbar { flex: none; height: 18px; display: flex; align-items: center; background: #323639; color: #dadce0; padding: 0 5px 0 3px; }
.cbar > button { width: 16px; display: flex; justify-content: center; }
.cbar > .k { width: 9px; }
.addr { flex: 1; height: 14px; border-radius: 7px; background: #202124; display: flex; align-items: center; gap: 4px; padding: 0 5px; margin: 0 3px 0 4px; }
.addr p { flex: 1; color: #80868b; font-size: 7px; }
.addr p b { font-weight: 400; color: #e8eaed; }
.addr button { width: 12px; display: flex; justify-content: center; }
.cbar > .paused { justify-content: flex-start; width: 40px; height: 13px; border: 1px solid #5a7cc4; border-radius: 7px; display: flex; align-items: center; gap: 4px; color: #7da2e8; margin: 0 1px 0 2px; }
.view { flex: 1; min-height: 0; display: flex; font-family: "Liberation Sans", sans-serif; }
.page { flex: 1; min-width: 0; overflow: hidden; position: relative; display: flex; flex-direction: column; background: #f7f8f8; color: #444; }
.page > * { flex: none; }
.cscroll { flex: none; width: 9px; background: #f1f1f1; padding: 0 1px; }
.cscroll::before { content: "▲"; display: block; font-size: 4px; height: 10px; line-height: 10px; text-align: center; color: #666; }
.cscroll div { background: #c1c1c1; }

.trial { height: 25px; background: #464857; color: #eee; display: flex; align-items: center; justify-content: space-between; padding: 0 5px 0 10px; font-size: 7px; }
.trial button { width: 37px; height: 15px; background: #0f8a3c; border-radius: 2px; font-weight: 700; color: #fff; }
.xnav { height: 30px; background: #0077c8; color: #fff; display: flex; align-items: center; padding: 0 7px 0 8px; font-size: 8px; }
.org { width: 106px; height: 17px; background: #0b5596; border-radius: 2px; margin-right: 6px; }
.xnav a { font-weight: 700; height: 30px; line-height: 28px; padding: 1px 6px 0; }
.xnav .on { border-bottom: 2px solid #cfe8fa; }
.xnav .tools { margin-left: auto; display: flex; align-items: center; gap: 9px; }
.tools button { width: 16px; height: 16px; display: flex; align-items: center; justify-content: center; }
.q { width: 8px; height: 8px; border-radius: 50%; background: #fff; color: #0077c8; line-height: 8px; font-size: 7px; text-align: center; }
.tools .me { background: #e79bdc; border-radius: 50%; font-size: 5px; font-weight: 700; color: #7a3a78; }
.sub { height: 30px; background: #fff; display: flex; align-items: center; padding-left: 81px; padding-right: 82px; font-size: 7px; border-bottom: 1px solid #ddd; color: #555; }
.sub h1 { font-size: 9px; font-weight: 700; color: #222; margin-right: 13px; }
.sub a { height: 30px; line-height: 30px; padding: 0 7px; }
.sub .on { color: #0077c8; border-bottom: 2px solid #0077c8; }
.find { margin-left: auto; width: 100px; height: 20px; border: 1px solid #aaa; display: flex; align-items: center; gap: 4px; padding-left: 3px; }
.sub > button { margin-left: 2px; }
.reports { margin: 11px 80px 0 81px; border: 1px solid #ddd; border-bottom: 0; background: #fff; }
.item { height: 35px; border-bottom: 1px solid #d4d6d8; display: flex; align-items: center; gap: 6px; padding: 0 9px 2px 6px; color: #777; }
.item.on { background: #e3e4e5; }
.item div { flex: 1; font-size: 7px; line-height: 10px; }
.item h2 { font-size: 8px; font-weight: 700; color: #222; }
.reports-page { background: #f0f2f4; }
.hint { position: absolute; left: 0; bottom: 0; width: 166px; height: 11px; background: #2b2c2f; color: #9a9ca0; font: 6px/11px "Open Sans", sans-serif; padding-left: 3px; }

.doc { min-height: 0; overflow: hidden; background: #f7f8f8; }
.page > .doc { flex: 1; }
.bigtitle { font-size: 15px; line-height: 16px; font-weight: 700; color: #333; padding-left: 22px; margin-top: -4px; }
.card { margin: 9px 22px 13px; height: 44px; background: #fff; box-shadow: 0 1px 2px #ccc; display: flex; align-items: center; padding: 0 16px 0 13px; font-size: 7px; }
.card label { width: 62px; font-weight: 700; font-size: 7px; }
.box { height: 17px; border: 1px solid #ccc; display: flex; align-items: center; margin-right: 4px; background: #fff; }
.box.a { width: 102px; }
.box.b { width: 67px; }
.box input { flex: 1; font-size: 8px; padding-left: 3px; }
.box button { width: 12px; height: 15px; border-left: 1px solid #ccc; background: #f3f3f3; font-size: 5px; }
.update { width: 75px; height: 18px; background: #0b9bd3; color: #fff; font-weight: 700; font-size: 8px; border-radius: 1px; }
.card a { margin-left: auto; color: #0b76b8; font-weight: 700; font-size: 8px; }
.paper { margin: 0 16px 0 17px; border: 1px solid #e2e4e5; background: #fff; padding: 17px 12px 0; height: 480px; }
.paper h1 { font-size: 19px; line-height: 22px; font-weight: 700; color: #333; padding-left: 7px; margin-bottom: 6px; }
.paper > p { font-size: 12px; line-height: 18px; padding-left: 7px; color: #444; }
.inner { margin-top: 13px; border: 1px solid #e2e4e5; padding: 7px 17px 0 6px; height: 360px; }
.inner.plain { border-color: transparent; }
.inner > p { text-align: right; margin-right: -8px; font-size: 8px; line-height: 12px; height: 12px; color: #aaa; margin-bottom: 12px; }
.rep { font-size: 7px; line-height: 9px; color: #444; }
.rep td, .rep th { text-align: right; padding: 0 4px; vertical-align: middle; }
.rep td:first-child { text-align: left; padding-left: 17px; }
.rep th:first-child { text-align: left; padding-left: 4px; font-size: 11px; line-height: 13px; }
.rep tr { height: 18px; }
.rep .r19 { height: 19px; }
.rep .hd { height: 20px; }
.rep .hd2 { height: 29px; }
.rep .hd th, .rep .hd2 th { vertical-align: bottom; padding-bottom: 3px; border-bottom: 1px solid #bbb; }
.rep .row td { border-bottom: 1px solid #eee; }
.rep .b td { font-weight: 700; color: #333; }
.rep .gp { height: 17px; }
.rep .gp th { background: #fafafa; border-top: 1px solid #bbb; border-bottom: 1px solid #ccc; }
.rep .sp { height: 6px; }
.rep .end td { border-bottom: 2px solid #ccc; }
.rep .cur { height: 24px; }
.rep .cur td { font-weight: 700; border-bottom: 1px solid #aaa; padding-top: 4px; }
.rep .deep td:first-child { padding-left: 30px; }
.rep a { color: #1490bd; }
.foot { height: 36px; background: #fff; border-top: 1px solid #ddd; display: flex; align-items: center; gap: 5px; padding: 0 7px 1px; }
.foot button { height: 20px; border: 1px solid #bfc3c6; border-radius: 2px; color: #0b76b8; font-weight: 700; font-size: 8px; width: 59px; }
.foot .save { margin-left: auto; width: 78px; }
.foot .exp { width: 53px; }
.cmenu { position: absolute; left: 73px; top: 5px; width: 109px; height: 111px; background: #292a2d; color: #ddd; padding-top: 2px; display: flex; flex-direction: column; box-shadow: 0 0 1px #000; }
.cmenu button { height: 12px; padding: 0 14px 0 12px; display: flex; align-items: center; justify-content: space-between; }
.cmenu .hi { background: #45474b; margin-bottom: 5px; }
.cmenu .sep { margin-top: 3px; border-top: 1px solid #444; padding-top: 4px; height: 16px; }
.cmenu .off { color: #77797c; }
```

FILE: frames.js
```js
const ic = (n, w = 8, h = w) => `<svg class="ic" width="${w}" height="${h}"><use href="#${n}"/></svg>`;
const btn = (n, w, cls = '') => `<button class="${cls}" aria-label="${n}">${ic(n, w)}</button>`;
const dd = '<span class="dd">▾</span>';

function taskbar(cur, lastHot) {
  const apps = [['folder', 'run'], ['word', 'run'], ['outlook', ''], ['excel', 'run'], ['brave', 'run'], ['edge', ''], ['pad', ''], ['chrome', 'run'], ['onenote', 'run'], ['qb', 'run'], ['ppt', 'run hl'], ['media', 'run']];
  return `<nav class="taskbar">${['win', 'search', 'ring', 'tview'].map(n => btn(n, 9, 'sys')).join('')}${
    apps.map(([n, c]) => btn(n, n === 'edge' || n === 'media' ? 8 : 9, c + (n === cur || (lastHot && n === 'media') ? ' cur' : ''))).join('')
  }<div class="tray"><span>${ic('up', 6)}</span><span>${ic('gpu', 8)}</span><span>${ic('cloud', 9)}</span><span>${ic('monitor', 8)}</span><span>${ic('speaker', 8)}</span><span class="clock">1:</span><span>${ic('note', 8)}</span></div></nav>`;
}

function ribbon() {
  const t = (g, on) => `<button class="t${on ? ' on' : ''}">${g}</button>`;
  const lbl = (s, l) => `<div class="lbl"><span>${s}</span>${l ? ic('launch', 6) : ''}</div>`;
  const big = (n, a, b) => `<button class="big">${ic(n, 14)}<span>${a}</span><span>${b}</span></button>`;
  return `<div class="ribbon">
  <div class="grp"><div class="body"><button class="big">${ic('paste', 14, 15)}<span>Paste</span><span class="dd">▾</span></button><div class="stack">${btn('cut', 8)}${btn('copy', 8)}${btn('brush', 8)}</div></div>${lbl('Clipboard', 1)}</div>
  <div class="grp"><div class="body"><div class="rows"><div><span class="combo" style="width:58px"><select aria-label="Font"><option>Calibri</option></select>${dd}</span><span class="combo" style="width:22px"><select aria-label="Size"><option>11</option></select>${dd}</span>${t('A')}${t('ᴀ')}</div>
  <div>${t('<b>B</b>', 1)}${t('<i>I</i>')}${t('<u>U</u>')}${dd}${t(ic('borders', 8))}${dd}${t(ic('fill', 9))}${dd}<button class="t redline">A</button>${dd}</div></div></div>${lbl('Font', 1)}</div>
  <div class="grp"><div class="body"><div class="rows"><div>&nbsp;&nbsp;${t(ic('vt', 8))}${t(ic('vm', 8))}${t(ic('vb', 8), 1)}&nbsp;&nbsp;${t(ic('orient', 8))}${dd}&nbsp;&nbsp;&nbsp;${t(ic('wrap', 8))}<span>Wrap Text</span></div>
  <div>&nbsp;&nbsp;${t(ic('al', 8))}${t(ic('ac', 8))}${t(ic('ar', 8))}&nbsp;&nbsp;${t(ic('indl', 8))}${t(ic('indr', 8))}&nbsp;&nbsp;${t(ic('merge', 8))}<span>Merge &amp; Center</span>${dd}</div></div></div>${lbl('Alignment', 1)}</div>
  <div class="grp"><div class="body"><div class="rows"><div><span class="combo" style="width:65px"><select aria-label="Number format"><option>Number</option></select>${dd}</span></div>
  <div>${t('$')}${dd}${t('%')}${t('<b>,</b>')}&nbsp;&nbsp;&nbsp;${t(ic('dec', 8))}${t(ic('dec', 8))}</div></div></div>${lbl('Number', 1)}</div>
  <div class="grp"><div class="body">${big('condfmt', 'Conditional', 'Formatting ▾')}${big('fmttable', 'Format as', 'Table ▾')}${big('cellstyle', 'Cell', 'Styles ▾')}</div>${lbl('Styles')}</div>
  <div class="grp cellsg"><div class="body"><div class="stack"><button>${ic('cells', 8)}Insert ▾</button><button>${ic('cells', 8)}Delete ▾</button><button>${ic('cells', 8)}Format ▾</button></div></div>${lbl('Cells')}</div>
  <div class="grp"><div class="body"><div class="stack"><button><b>Σ</b>${dd}</button><button>${ic('filldown', 7)}${dd}</button><button>${ic('eraser', 7)}${dd}</button></div>${big('sortf', 'Sort &amp;', 'Filter ▾')}${big('find', 'Find &amp;', 'Select ▾')}</div>${lbl('Editing')}</div>
  <div class="grp"><div class="body">${big('bolt', 'Ideas', '')}</div>${lbl('Ideas')}</div>
  <div class="grp">${ic('up', 6)}</div></div>`;
}

function excel(f) {
  return `<div class="xtitle"><div class="auto">AutoSave<span class="switch"><i></i>Off</span></div>
  <div class="qa">${btn('save', 8)}<button class="w">${ic('undo', 8)}▾</button><button class="dim">${ic('redo', 8)}</button>${['qa1', 'qa2', 'qa3', 'qa4'].map(n => btn(n, 8)).join('')}<button>▾</button></div>
  <div class="fname">Problem 1 14nn .xlsx ▾</div><label class="xsearch">${ic('search', 8)}<input placeholder="Search" aria-label="Search"></label>
  <div class="user">Bob Steele<b>BS</b><button class="ra">${ic('ribbonmode', 7)}</button>${btn('min', 6)}${btn('max', 6)}${btn('close', 6)}</div></div>
  <nav class="xtabs">${['File', 'Home', 'Insert', 'Page Layout', 'Formulas', 'Data', 'Review', 'View', 'Add-ins', 'Help', 'BI Tools', 'QuickBooks'].map(s => `<button${s === 'Home' ? ' class="on"' : ''}>${s}</button>`).join('')}
  <button class="act sh">${ic('share', 6)}Share</button><button class="act cm">${ic('comment', 6)}Comments</button></nav>
  ${ribbon()}
  <div class="fbar"><span class="name"><input aria-label="Name box" value="${f.cell}">${dd}</span><span class="fx">${ic('close', 5)}<span>✓</span><i>fx</i></span><input class="formula" aria-label="Formula" value="${f.formula}"></div>
  <div class="sheetwrap"><div class="sheet">${f.table}</div><div class="vbar">▲<div style="height:${f.bar[1]}px;margin-top:${f.bar[0]}px"></div></div></div>
  <div class="stabs"><button class="ex">Example</button><button class="prac">Practice</button>${[1, 2, 3, 4, 5, 6, 7, 8, 9].map(n => `<button>${n}</button>`).join('')}<button class="ten">10</button><button class="new">+</button><div class="hbar"><span>◀</span><i></i><span>▶</span></div></div>
  <div class="status"><span class="ds">${ic('display', 7)}Display Settings</span><button class="on">${ic('vnormal', 7)}</button>${btn('vpage', 7)}${btn('vbreak', 7)}<span>−</span><input type="range" aria-label="Zoom"><span>+</span><span class="pct">100%</span></div>
  ${taskbar('excel')}`;
}

const cols = ws => `<colgroup>${ws.map(w => w ? `<col style="width:${w}px">` : '<col>').join('')}</colgroup>`;
const head = (names, hot) => `<thead><tr>${names.map(n => `<th${n === hot ? ' class="hot"' : ''}>${n}</th>`).join('')}</tr></thead>`;
const num = (v, cls, u) => `<td class="n ${cls}${/\)$/.test(v) ? ' pr' : ''}">${u && v ? `<u>${v}</u>` : v}</td>`;

function journal() {
  const G = { 3: '35,800', 6: '189,700', 9: '108,000', 12: '159,000', 15: '209,460' };
  const H = { 4: '(35,800)', 7: '(189,700)', 10: '(108,000)', 13: '(159,000)', 16: '(209,460)' };
  const J = { 3: '6', 6: '6b', 9: '6c', 12: '6d', 15: '6e' };
  const K = { 3: ['Telephone Expense'], 4: ['Cash', 1], 6: ['Printing &amp; Postage Expense'], 7: ['Cash', 1], 9: ['Utilities Expense'], 10: ['Cash'], 12: ['Supplies Expense'], 13: ['Cash'], 15: ['Supplies Expense'], 16: ['Accounts Payable'] };
  const L = { 3: '6,200', 6: '12,900', 9: '9,100', 12: '500', 15: '4,500' };
  const M = { 4: '(6,200)', 7: '(12,900)', 10: '(9,100)', 13: '(500)', 16: '(4,500)' };
  const O = [['Cash', 'fg', '97,540'], ['Contributions Receivable', 'fg', '217,100'], ['Allowance for Uncollectible Pledges - Unrestricted', 'fg', '(21,600)'], ['Discount on Contributions Receivable', 'fg', '(12,940)'], ['Equipment &amp; Furniture', 'fg', '24,500'], ['Allowance for Depreciation', 'fg', '(4,400)'], ['Accounts Payable', 'fo', '(4,500)'], ['Salaries Payable', 'fo', '(16,800)'], ['Net Assets Without Donor Restrictions', 'fb', ''], ['Net Assets With Donor Restrictions', 'fb', ''], ['Contributions-Without Donor Restrictions', 'fd', '(237,000)'], ['Contributions-With Donor Restrictions', 'fd', '(363,160)'], ['Net Assets Released-Satisfaction of Purpose\nRestriction-Without Donor Restrictions', 'fd', ''], ['Net Assets Released - Satisfaction of Purpose\nRestriction-With Donor Restrictions', 'fd', ''], ['Rent Expense', 'fd', '35,800']];
  const tone = { fg: 'gn', fo: 'ye', fb: 'lb', fd: 'bl' };
  const bk = (v = '') => `<td class="bk c">${v}</td>`;
  let r = `<tr class="h11"><th>1</th>${bk()}${bk()}<td class="sw"></td>${bk()}${bk()}${bk()}${bk()}<td class="sw"></td>${bk()}${bk('Beg')}${bk()}${bk('End')}<td></td></tr>
  <tr class="h18"><th>2</th>${bk('Debit')}${bk('(Credit)')}<td class="sw"></td>${bk()}${bk('Accounts')}${bk('Debit')}${bk('(Credit)')}<td class="sw"></td>${bk('Accounts')}${bk('Trial Bal')}${bk('ADJ')}${bk('Trial Bal')}<td></td></tr>`;
  for (let i = 3; i <= 17; i++) {
    const [name, c, v] = O[i - 3], k = K[i] || ['', 0], z = tone[c];
    const h = i === 17 ? 'h20' : i > 14 ? 'h19' : i % 3 === 2 ? 'h11' : '';
    r += `<tr class="${h}"><th${i === 12 ? ' class="hot"' : ''}>${i}</th>${num(G[i] || '', 'cy')}${num(H[i] || '', 'cy')}<td class="sw"></td><td class="cy ${i === 3 ? 'n' : 'i0'}">${J[i] || ''}</td><td class="cy i${k[1] || 0}${i === 12 ? ' sel' : ''}">${k[0]}</td>${num(L[i] || '', 'cy')}${num(M[i] || '', 'cy')}<td class="sw"></td><td class="${c} i0 wrap2">${name}</td>${num('0', z)}${num(v, 'cq')}${num(v || '0', z)}<td${i === 17 ? ' class="bk"' : ''}></td></tr>`;
  }
  return `<table class="grid">${cols([13, 37, 37, 3, 15, 0, 45, 46, 7, 162, 43, 40, 42, 9])}${head(['', 'G', 'H', 'I', 'J', 'K', 'L', 'M', 'N', 'O', 'P', 'Q', 'R', 'S'], 'K')}<tbody>${r}</tbody></table>`;
}

/* row: P, Q, R, tone, indent, T, U, V, W, underline */
const activity = {
  40: ['(4,400)', '', '(4,400)', 'gn', 1, 'Accounts Payable', '4,500', '', ''],
  41: ['(4,500)', '', '(4,500)', 'ye', 1, 'Salaries Payable', '16,800', '', '', 1],
  42: ['(16,800)', '', '(16,800)', 'ye', 2, 'Total Liabilities', '', '21,300', ''],
  43: ['0', '', '0', 'lb', 0, 'Net Assets', '', '', ''],
  44: ['0', '', '0', 'lb', 1, 'Without Donor Restrictions', '44,244', '', ''],
  45: ['(237,000)', '', '(237,000)', 'bl', 1, 'With Donor Restrictions', '234,656', '', '', 1],
  46: ['(363,160)', '', '(363,160)', 'bl', 2, 'Total Net Assets', '', '278,900', '', 1],
  47: ['0', '128,504', '128,504', 'bl', 0, 'Total Liabilities &amp; Net Assets', '', '300,200', '', 1],
  48: ['0', '64,252', '64,252', 'bl', 0, '', '', '', ''],
  49: ['0', '64,252', '64,252', 'bl', 0, 'Statement of Activities', 'Without', 'With', ''],
  50: ['0', '64,252', '64,252', 'bl', 0, '', 'Donor', 'Donor', ''],
  51: ['0', '(128,504)', '(128,504)', 'bl', 0, '', 'Restrictions', 'Restrictions', 'Total'],
  52: ['0', '128,504', '128,504', 'bl', 0, 'Revenue and Other Support:', '', '', ''],
  53: ['35,800', '(35,800)', '0', 'bl', 1, 'Contributions', '237,000', '363,160', '600,160'],
  54: ['226,260', '(226,260)', '0', 'bl', 1, 'Net Assets Released from Restriction Satisfaction of Purpose', '128,504', '(128,504)', '0', 1],
  55: ['6,200', '(6,200)', '0', 'bl', 2, 'Total Revenue and Other Support', '365,504', '234,656', '600,160'],
  56: ['12,900', '(12,900)', '0', 'bl', 0, 'Expenses:', '', '', ''],
  57: ['9,100', '(9,100)', '0', 'bl', 1, 'Public Health Education Program', '128,504', '', '128,504'],
  58: ['5,000', '(5,000)', '0', 'bl', 1, 'Community Service Program', '64,252', '', '64,252'],
  59: ['21,600', '(21,600)', '0', 'bl', 1, 'Management &amp; General', '64,252', '', '64,252'],
  60: ['4,400', '(4,400)', '0', 'bl', 1, 'Fund-Raising', '64,252', '', '64,252', 1],
  61: ['0', '0', '0', 'tot', 2, 'Total Expenses', '321,260', '', '321,260', 1],
  62: ['(278,900)', '0', '(278,900)', 'bl', 0, 'Increase in Net Assets', '44,244', '234,656', '278,900'],
  63: ['', '', '', '', 0, 'Beginning Net Assets', '0', '0', '0', 1],
  64: ['', '', '', '', 0, 'Ending Net Assets', '44,244', '234,656', '278,900']
};
function statement(from, to, heights, selRow, hotCol) {
  let r = '';
  for (let i = from; i <= to; i++) {
    const [p, q, rr, z, ind, t, u, v, w, ul] = activity[i];
    const hdr = i >= 49 && i <= 51, fill = i === 48 ? '' : 'cy', wf = i >= 52 ? 'cy' : '';
    const n = (x, c) => hdr ? `<td class="bk c">${x}</td>` : num(x, c, ul);
    const green = i <= 42 || i === 45 || i === 46 || i === 51 || i === 52;
    r += `<tr class="h${heights[i - from] || 10}"><th${i === selRow ? ' class="hot"' : ''}>${i}</th>${num(p, z)}${num(q, i === 61 ? 'tot' : i === 62 ? 'bl' : i > 62 ? '' : 'cq')}${num(rr, z)}<td class="${green ? 'sg' : 'sw'}"></td><td class="${hdr ? 'bk' : fill} i${ind}${i === selRow ? ' sel' : ''}">${t}</td>${n(u, fill)}${n(v, fill)}${n(w, wf)}<td></td><td></td><td></td></tr>`;
  }
  return `<table class="grid">${cols([13, 42, 41, 42, 5, 0, 49, 49, 49, 49, 49, 37])}${head(['', 'P', 'Q', 'R', 'S', 'T', 'U', 'V', 'W', 'X', 'Y', 'Z'], hotCol)}<tbody>${r}</tbody></table>`;
}

function chrome(f) {
  return `<div class="ctabs">${f.tabs.map((t, i) => `<div class="ctab${i === f.on ? ' on' : ''}">${ic('xero', 8)}<span>${t}</span>${ic('close', 5)}</div>`).join('')}<button class="add">${ic('plus', 6)}</button><div class="wc">${btn('min', 6)}${btn('max', 6)}${btn('close', 6)}</div></div>
  <div class="cbar">${btn('back', 7)}<button class="dim">${ic('fwd', 7)}</button>${btn('reload', 7)}<div class="addr">${ic('lock', 6)}<p><b>reporting.xero.com</b>/${f.url}</p>${f.zoom ? btn('zoomin', 7) : ''}${btn('star', 8)}</div>${['e1', 'e2', 'e3', 'e4', 'e5', 'e6', 'e7'].map(n => btn(n, 8)).join('')}<button>${ic('queue', 8)}</button><button class="paused">${ic('person', 11)}Paused</button><button class="k">${ic('kebab', 7)}</button></div>
  <div class="view"><div class="page ${f.cls || ''}">${f.body}</div><div class="cscroll"><div style="margin-top:${f.bar[0]}px;height:${f.bar[1]}px"></div></div></div>
  ${taskbar('chrome', f.lastHot)}`;
}

const foot = `<div class="foot"><button>Edit layout</button><button class="save">Save as custom</button><button class="exp">Export &nbsp;▾</button></div>`;
const doc = (shift, title, period, rows, inner = '', edit = 'Edit', pre = '') =>
  `<div class="doc">${pre}<section class="paper" style="margin-top:${shift}px"><h1>${title}</h1><p>Not For Profit Organization</p><p>${period}</p><div class="inner ${inner}"><p>${edit}</p>${rows}</div></section></div>${foot}`;
const tr = (cells, cls, blue = []) => `<tr class="${cls}">${cells.map((c, i) => `<td>${blue.includes(i) && c !== '-' ? `<a href="#">${c}</a>` : c}</td>`).join('')}</tr>`;
const th = (cells, cls) => `<tr class="${cls}">${cells.map(c => `<th>${c}</th>`).join('')}</tr>`;
const step = i => i % 3 === 0 ? 'r19 row' : 'row';

const expenses = [['Depreciation', '4,400.00'], ['Office Supplies', '5,000.00'], ['Prevision for Uncollectible Pledges', '21,600.00'], ['Printing &amp; Postage', '12,900.00'], ['Rent', '35,800.00'], ['Telephone', '6,200.00'], ['Utilities', '9,100.00'], ['Wages &amp; Salaries', '226,260.00']];
const activities = `<table class="rep">${cols([0, 100, 50, 50])}${th(['Income', 'Unrestricted', 'Restricted', 'Total'], 'hd')}
${tr(['Contributions', '237,000.00', '204,160.00', '441,160.00'], 'row', [1, 2])}${tr(['Government Grants', '-', '159,000.00', '159,000.00'], 'row', [2])}${tr(['Net Assets Released from Restriction', '128,504.00', '(128,504.00)', '-'], 'r19 row', [1, 2])}${tr(['Total Income', '365,504.00', '234,656.00', '600,160.00'], 'b')}<tr class="sp"><td colspan="4"></td></tr>
${th(['Gross Profit', '365,504.00', '234,656.00', '600,160.00'], 'gp')}${th(['Operating Expenses', '', '', ''], 'hd2')}
${expenses.map(([n, v], i) => tr([n, v, '-', v], step(i + 1), [1])).join('')}${tr(['Total Operating Expenses', '321,260.00', '-', '321,260.00'], 'r19 b')}<tr class="sp end"><td colspan="4"></td></tr></table>`;
const nature = `<table class="rep">${cols([0, 60, 97, 64, 51, 69, 51])}${th(['Operating Expenses', 'Education 40%', 'Community Service 20%', 'Total Programs', 'Admin 20%', 'Fundraising 20%', 'Total'], 'hd')}
${[['1,760.00', '880.00', '2,640.00'], ['2,000.00', '1,000.00', '3,000.00'], ['8,640.00', '4,320.00', '12,960.00'], ['5,160.00', '2,580.00', '7,740.00'], ['14,320.00', '7,160.00', '21,480.00'], ['2,480.00', '1,240.00', '3,720.00'], ['3,640.00', '1,820.00', '5,460.00'], ['90,504.00', '45,252.00', '135,756.00']].map(([a, b, c], i) => tr([expenses[i][0], a, b, c, b, b, expenses[i][1]], step(i + 1), [1, 2, 4, 5])).join('')}</table>`;
const position = `<table class="rep">${cols([0, 100])}${th(['Assets', 'Jan 31, 2020'], 'hd')}${tr(['Current Assets', ''], 'cur')}${tr(['Cash and Cash Equivalents', '97,540.00'], 'row deep', [1])}</table>`;

const reports = [['Statement of Financial Position', '34 minutes ago'], ['Restricted Items Detail', '1 hour ago'], ['Expenses by Nature and Function', '2 hours ago'], ['Statement of Activities', '2 hours ago'], ['Unrestricted Worksheet', 'yesterday'], ['Restricted Items Worksheet', '3 days ago']];
const reportList = `<div class="trial">You're using a trial account.<button>Pay now</button></div>
<nav class="xnav"><button class="org">Not For Profit Organization ▾</button>${['Dashboard', 'Business', 'Accounting', 'Projects', 'Contacts'].map(s => `<a href="#"${s === 'Accounting' ? ' class="on"' : ''}>${s}</a>`).join('')}<div class="tools">${btn('plus', 6)}${btn('bell', 8)}<button><span class="q">?</span></button><button class="me">BS</button></div></nav>
<div class="sub"><h1>Reports</h1>${['Summary', 'Custom', 'Drafts', 'Published', 'Archived'].map(s => `<a href="#"${s === 'Custom' ? ' class="on"' : ''}>${s}</a>`).join('')}<label class="find">${ic('searchr', 8)}<input placeholder="Search Reports" aria-label="Search Reports"></label>${btn('sortd', 12)}</div>
<div class="reports">${reports.map(([t, w], i) => `<div class="item${i ? '' : ' on'}">${ic(i > 3 ? 'starf' : 'star', 8)}<div><h2>${t}</h2><p>Created ${w}</p></div>${ic('kebab', 7)}</div>`).join('')}</div>
<div class="hint">https://reporting.xero.com/!hc69C/v2/Run/Custom/4197791</div>`;

const settings = `<h1 class="bigtitle">Statement of Financial Position</h1><div class="card"><label for="range">Date Range:</label><span class="box a"><input id="range"><button>▼</button></span><span class="box b"><input value="Jan 31, 2020" aria-label="End date"><button>▼</button></span><button class="update">Update</button><a href="#">Report Settings</a></div>`;
const menu = `<div class="cmenu"><button class="hi">New tab to the right</button><button>Reload<span>Ctrl+R</span></button><button>Duplicate</button><button>Pin</button><button>Mute site</button><button class="sep">Close<span>Ctrl+W</span></button><button class="off">Close other tabs</button><button class="off">Close tabs to the right</button></div>`;

const mark = (n, x, y, w, h) => `<div class="overlay" style="left:${x}px;top:${y}px">${ic(n, w, h)}</div>`;
const halo = (x, y) => `<div class="halo" style="left:${x}px;top:${y}px"></div>`;

const h46 = [11, 10, 10, 11, 10, 20, 19, 10, 10, 11, 10, 10, 11, 10, 10, 10, 11, 11, 10];
const frames = [
  ['00:02:02', excel({ cell: 'K12', formula: '=O22', table: journal(), bar: [3, 35] }) + mark('cross', 165, 235, 8, 8)],
  ['00:04:02', excel({ cell: 'T49', formula: 'Statement of Activities', table: statement(40, 58, [11, 10, 10, 11, 10, 10, 11, 10, 10, 10, 10, 20, 20, 10, 10, 11, 10, 10, 10], 49, 'T'), bar: [80, 36] }) + mark('cross', 216, 222, 8, 8)],
  ['00:06:04', excel({ cell: 'T50', formula: '', table: statement(46, 64, h46, 50, 'T'), bar: [93, 36] }) + mark('cross', 213, 212, 8, 8)],
  ['00:08:04', excel({ cell: 'V22', formula: '=R21*$V$16', table: statement(46, 64, h46, 0, 'V'), bar: [93, 36] }) + mark('cross', 442, 233, 8, 8)],
  ['00:10:06', chrome({ tabs: ['Xero | Reports | Not For Profit Or'], on: 0, url: '!hc69C/custom-reports', cls: 'reports-page', body: reportList, bar: [0, 255] }) + halo(139, 138) + mark('hand', 147, 150, 8, 12)],
  ['00:12:06', chrome({ tabs: ['Xero | Statement of Financial Po'], on: 0, url: '!hc69C/v1/Run/4197791?isCustom=True', zoom: 1, body: doc(0, 'Statement of Financial Position', 'As of January 31, 2020', position, 'plain', '', settings), bar: [30, 97] }) + menu + halo(77, 10) + mark('arrow', 88, 22, 7, 10)],
  ['00:14:08', chrome({ tabs: ['Xero | Statement of Activities', 'Xero | Statement of Financial Po'], on: 0, url: '!hc69C/v1/Run/4197778?isCustom=True', zoom: 1, body: doc(-172, 'Statement of Activities', 'For the year ended December 31, 2020', activities), bar: [138, 124] }) + mark('arrow', 172, 266, 7, 10)],
  ['00:16:08', chrome({ tabs: ['Xero | Expenses by Nature and F', 'Xero | Statement of Activities', 'Xero | Statement of Financial Po'], on: 0, url: '!hc69C/v1/Run/4197789', zoom: 1, lastHot: 1, body: doc(-22, 'Expenses by Nature and Function', 'For the year ended December 31, 2020', nature), bar: [96, 150] }) + halo(430, 146) + mark('arrow', 441, 158, 7, 10)],
  ['00:18:18', chrome({ tabs: ['Xero | Expenses by Nature and F', 'Xero | Restricted Items Detail', 'Xero | Statement of Activities', 'Xero | Statement of Financial Po'], on: 2, url: '!hc69C/v1/Run/4197778?isCustom=True', zoom: 1, body: doc(5, 'Statement of Activities', 'For the year ended December 31, 2020', activities), bar: [68, 124] }) + mark('arrow', 365, 219, 7, 10)]
];
document.getElementById('frames').innerHTML = frames.map(([time, html]) => `<article class="frame">${html}<time class="time">${time}</time></article>`).join('');
```
